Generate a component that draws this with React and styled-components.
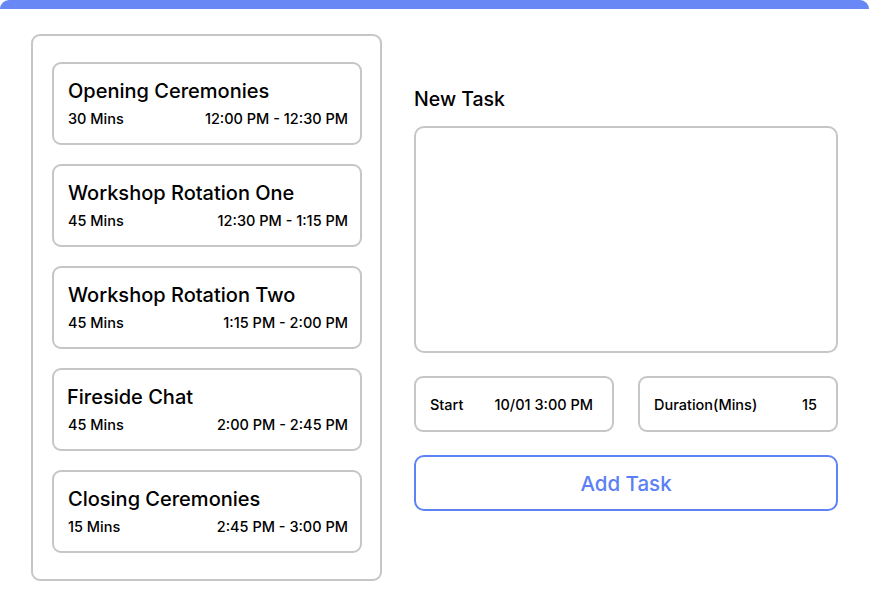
import React from "react";
import styled, { createGlobalStyle } from "styled-components";

const Global = createGlobalStyle`
  html, body { margin: 0; padding: 0; background: #fff; }
  body { font-family: Inter, "Noto Sans", "Liberation Sans", sans-serif; color: #000; }
  * { box-sizing: border-box; }
`;

const Page = styled.div`
  width: 869px;
  height: 609px;
  background: #fff;
  overflow: hidden;
`;

const TopBar = styled.div`
  height: 9px;
  background: #6889f5;
  border-radius: 10px 10px 0 0;
`;

const Main = styled.div`
  display: grid;
  grid-template-columns: 351px 424px;
  column-gap: 32px;
  padding: 25px 0 0 31px;
  align-items: start;
`;

const ListPanel = styled.div`
  border: 2px solid #c6c6c6;
  border-radius: 9px;
  padding: 26px 18px 26px 19px;
  display: flex;
  flex-direction: column;
  gap: 19px;
  height: 547px;
`;

const Card = styled.div`
  height: 83px;
  border: 2px solid #c6c6c6;
  border-radius: 9px;
  padding: 14px 12px 0 14px;
  display: flex;
  flex-direction: column;
`;

const CardTitle = styled.div`
  font-size: 20px;
  font-weight: 500;
  line-height: 26px;
  color: #000;
  margin-left: ${(p) => p.$shift || 0}px;
`;

const CardMeta = styled.div`
  display: flex;
  justify-content: space-between;
  font-size: 14.5px;
  font-weight: 500;
  line-height: 18px;
  margin-top: 6px;
  color: #000;
`;

const FormCol = styled.div`
  display: flex;
  flex-direction: column;
  padding-top: 53px;
`;

const FormTitle = styled.div`
  font-size: 19.5px;
  font-weight: 500;
  line-height: 24px;
  color: #000;
  margin-bottom: 15px;
`;

const TextArea = styled.div`
  height: 227px;
  border: 2px solid #c6c6c6;
  border-radius: 10px;
`;

const FieldRow = styled.div`
  display: grid;
  grid-template-columns: 1fr 1fr;
  column-gap: 24px;
  margin-top: 23px;
`;

const Field = styled.div`
  height: 56px;
  border: 2px solid #c6c6c6;
  border-radius: 9px;
  display: flex;
  align-items: center;
  justify-content: space-between;
  padding: 0 19px 0 14px;
  font-size: 14.5px;
  font-weight: 500;
  color: #000;
`;

const AddButton = styled.button`
  margin-top: 23px;
  height: 56px;
  border: 2px solid #5e83f5;
  border-radius: 10px;
  background: #fff;
  color: #5b80f5;
  font-family: Inter, "Noto Sans", "Liberation Sans", sans-serif;
  font-size: 20.5px;
  font-weight: 500;
  cursor: pointer;
`;

const tasks = [
  { title: "Opening Ceremonies", dur: "30 Mins", time: "12:00 PM - 12:30 PM" },
  { title: "Workshop Rotation One", dur: "45 Mins", time: "12:30 PM - 1:15 PM" },
  { title: "Workshop Rotation Two", dur: "45 Mins", time: "1:15 PM - 2:00 PM" },
  { title: "Fireside Chat", dur: "45 Mins", time: "2:00 PM - 2:45 PM", shift: -1 },
  { title: "Closing Ceremonies", dur: "15 Mins", time: "2:45 PM - 3:00 PM" },
];

export default function App() {
  return (
    <Page>
      <Global />
      <TopBar />
      <Main>
        <ListPanel>
          {tasks.map((t) => (
            <Card key={t.title}>
              <CardTitle $shift={t.shift}>{t.title}</CardTitle>
              <CardMeta>
                <span>{t.dur}</span>
                <span>{t.time}</span>
              </CardMeta>
            </Card>
          ))}
        </ListPanel>
        <FormCol>
          <FormTitle>New Task</FormTitle>
          <TextArea />
          <FieldRow>
            <Field>
              <span>Start</span>
              <span>10/01 3:00 PM</span>
            </Field>
            <Field>
              <span>Duration(Mins)</span>
              <span>15</span>
            </Field>
          </FieldRow>
          <AddButton>Add Task</AddButton>
        </FormCol>
      </Main>
    </Page>
  );
}
